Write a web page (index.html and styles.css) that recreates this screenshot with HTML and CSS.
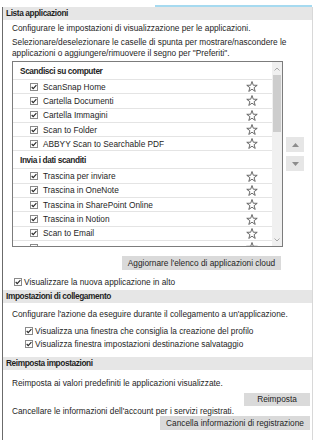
FILE: index.html
```html
<!DOCTYPE html>
<html lang="it">
<head>
<meta charset="utf-8">
<link rel="stylesheet" href="styles.css">
</head>
<body>
<div class="topline"></div>
<div class="panel">
  <section class="sec">
    <div class="sec-head">Lista applicazioni</div>
    <div class="sec-body s1">
      <p>Configurare le impostazioni di visualizzazione per le applicazioni.</p>
      <p class="t2">Selezionare/deselezionare le caselle di spunta per mostrare/nascondere le<br>applicazioni o aggiungere/rimuovere il segno per "Preferiti".</p>
      <div class="list-row">
        <div class="list">
          <div class="items">
            <div class="cat">Scandisci su computer</div>
            <div class="item"><svg class="cb" width="8" height="8" viewBox="0 0 8 8"><rect x=".5" y=".5" width="7" height="7"/><path d="M1.7 4l1.5 1.6L6.4 2.1"/></svg><span>ScanSnap Home</span><svg class="star" width="12" height="11" viewBox="0 0 12 11"><polygon points="6,0.5 7.29,4.22 11.23,4.3 8.09,6.68 9.23,10.45 6,8.2 2.77,10.45 3.91,6.68 0.77,4.3 4.71,4.22"/></svg></div>
            <div class="item"><svg class="cb" width="8" height="8" viewBox="0 0 8 8"><rect x=".5" y=".5" width="7" height="7"/><path d="M1.7 4l1.5 1.6L6.4 2.1"/></svg><span>Cartella Documenti</span><svg class="star" width="12" height="11" viewBox="0 0 12 11"><polygon points="6,0.5 7.29,4.22 11.23,4.3 8.09,6.68 9.23,10.45 6,8.2 2.77,10.45 3.91,6.68 0.77,4.3 4.71,4.22"/></svg></div>
            <div class="item"><svg class="cb" width="8" height="8" viewBox="0 0 8 8"><rect x=".5" y=".5" width="7" height="7"/><path d="M1.7 4l1.5 1.6L6.4 2.1"/></svg><span>Cartella Immagini</span><svg class="star" width="12" height="11" viewBox="0 0 12 11"><polygon points="6,0.5 7.29,4.22 11.23,4.3 8.09,6.68 9.23,10.45 6,8.2 2.77,10.45 3.91,6.68 0.77,4.3 4.71,4.22"/></svg></div>
            <div class="item"><svg class="cb" width="8" height="8" viewBox="0 0 8 8"><rect x=".5" y=".5" width="7" height="7"/><path d="M1.7 4l1.5 1.6L6.4 2.1"/></svg><span>Scan to Folder</span><svg class="star" width="12" height="11" viewBox="0 0 12 11"><polygon points="6,0.5 7.29,4.22 11.23,4.3 8.09,6.68 9.23,10.45 6,8.2 2.77,10.45 3.91,6.68 0.77,4.3 4.71,4.22"/></svg></div>
            <div class="item"><svg class="cb" width="8" height="8" viewBox="0 0 8 8"><rect x=".5" y=".5" width="7" height="7"/><path d="M1.7 4l1.5 1.6L6.4 2.1"/></svg><span>ABBYY Scan to Searchable PDF</span><svg class="star" width="12" height="11" viewBox="0 0 12 11"><polygon points="6,0.5 7.29,4.22 11.23,4.3 8.09,6.68 9.23,10.45 6,8.2 2.77,10.45 3.91,6.68 0.77,4.3 4.71,4.22"/></svg></div>
            <div class="cat">Invia i dati scanditi</div>
            <div class="item"><svg class="cb" width="8" height="8" viewBox="0 0 8 8"><rect x=".5" y=".5" width="7" height="7"/><path d="M1.7 4l1.5 1.6L6.4 2.1"/></svg><span>Trascina per inviare</span><svg class="star" width="12" height="11" viewBox="0 0 12 11"><polygon points="6,0.5 7.29,4.22 11.23,4.3 8.09,6.68 9.23,10.45 6,8.2 2.77,10.45 3.91,6.68 0.77,4.3 4.71,4.22"/></svg></div>
            <div class="item"><svg class="cb" width="8" height="8" viewBox="0 0 8 8"><rect x=".5" y=".5" width="7" height="7"/><path d="M1.7 4l1.5 1.6L6.4 2.1"/></svg><span>Trascina in OneNote</span><svg class="star" width="12" height="11" viewBox="0 0 12 11"><polygon points="6,0.5 7.29,4.22 11.23,4.3 8.09,6.68 9.23,10.45 6,8.2 2.77,10.45 3.91,6.68 0.77,4.3 4.71,4.22"/></svg></div>
            <div class="item"><svg class="cb" width="8" height="8" viewBox="0 0 8 8"><rect x=".5" y=".5" width="7" height="7"/><path d="M1.7 4l1.5 1.6L6.4 2.1"/></svg><span>Trascina in SharePoint Online</span><svg class="star" width="12" height="11" viewBox="0 0 12 11"><polygon points="6,0.5 7.29,4.22 11.23,4.3 8.09,6.68 9.23,10.45 6,8.2 2.77,10.45 3.91,6.68 0.77,4.3 4.71,4.22"/></svg></div>
            <div class="item"><svg class="cb" width="8" height="8" viewBox="0 0 8 8"><rect x=".5" y=".5" width="7" height="7"/><path d="M1.7 4l1.5 1.6L6.4 2.1"/></svg><span>Trascina in Notion</span><svg class="star" width="12" height="11" viewBox="0 0 12 11"><polygon points="6,0.5 7.29,4.22 11.23,4.3 8.09,6.68 9.23,10.45 6,8.2 2.77,10.45 3.91,6.68 0.77,4.3 4.71,4.22"/></svg></div>
            <div class="item"><svg class="cb" width="8" height="8" viewBox="0 0 8 8"><rect x=".5" y=".5" width="7" height="7"/><path d="M1.7 4l1.5 1.6L6.4 2.1"/></svg><span>Scan to Email</span><svg class="star" width="12" height="11" viewBox="0 0 12 11"><polygon points="6,0.5 7.29,4.22 11.23,4.3 8.09,6.68 9.23,10.45 6,8.2 2.77,10.45 3.91,6.68 0.77,4.3 4.71,4.22"/></svg></div>
            <div class="item"><svg class="cb" width="8" height="8" viewBox="0 0 8 8"><rect x=".5" y=".5" width="7" height="7"/><path d="M1.7 4l1.5 1.6L6.4 2.1"/></svg><svg class="star" width="12" height="11" viewBox="0 0 12 11"><polygon points="6,0.5 7.29,4.22 11.23,4.3 8.09,6.68 9.23,10.45 6,8.2 2.77,10.45 3.91,6.68 0.77,4.3 4.71,4.22"/></svg></div>
          </div>
          <div class="sbar">
            <div class="sb-btn"><svg width="6" height="4" viewBox="0 0 6 4"><path d="M.5 3.5L3 1l2.5 2.5"/></svg></div>
            <div class="thumb"></div>
            <div class="track"></div>
            <div class="sb-btn"><svg width="6" height="4" viewBox="0 0 6 4"><path d="M.5 .5L3 3l2.5-2.5"/></svg></div>
          </div>
        </div>
        <div class="movers">
          <div class="mv"><svg width="7" height="4" viewBox="0 0 7 4"><polygon points="3.5,0 7,4 0,4"/></svg></div>
          <div class="mv"><svg width="7" height="4" viewBox="0 0 7 4"><polygon points="0,0 7,0 3.5,4"/></svg></div>
        </div>
      </div>
      <div class="btn-row refresh"><button class="btn w-refresh">Aggiornare l'elenco di applicazioni cloud</button></div>
      <div class="opt opt-top"><svg class="cb" width="8" height="8" viewBox="0 0 8 8"><rect x=".5" y=".5" width="7" height="7"/><path d="M1.7 4l1.5 1.6L6.4 2.1"/></svg><span>Visualizzare la nuova applicazione in alto</span></div>
    </div>
  </section>

  <section class="sec">
    <div class="sec-head">Impostazioni di collegamento</div>
    <div class="sec-body s2">
      <p>Configurare l'azione da eseguire durante il collegamento a un'applicazione.</p>
      <div class="opt opt-in first"><svg class="cb" width="8" height="8" viewBox="0 0 8 8"><rect x=".5" y=".5" width="7" height="7"/><path d="M1.7 4l1.5 1.6L6.4 2.1"/></svg><span>Visualizza una finestra che consiglia la creazione del profilo</span></div>
      <div class="opt opt-in"><svg class="cb" width="8" height="8" viewBox="0 0 8 8"><rect x=".5" y=".5" width="7" height="7"/><path d="M1.7 4l1.5 1.6L6.4 2.1"/></svg><span>Visualizza finestra impostazioni destinazione salvataggio</span></div>
    </div>
  </section>

  <section class="sec">
    <div class="sec-head">Reimposta impostazioni</div>
    <div class="sec-body s3">
      <p>Reimposta ai valori predefiniti le applicazioni visualizzate.</p>
      <div class="btn-row end"><button class="btn w-reset">Reimposta</button></div>
      <p class="tight">Cancellare le informazioni dell'account per i servizi registrati.</p>
      <div class="btn-row end"><button class="btn w-clear">Cancella informazioni di registrazione</button></div>
    </div>
  </section>
</div>
</body>
</html>
```

FILE: styles.css
```css
* { box-sizing: border-box; }

body {
  margin: 0;
  width: 315px;
  height: 448px;
  padding-top: 5px;
  background: #fff;
  font-family: "Liberation Sans", Arial, sans-serif;
  font-size: 8.3px;
  color: #1e1e1e;
  overflow: hidden;
}

.topline {
  height: 2px;
  margin-left: 155px;
  width: 157px;
  background: #a6daf0;
}

.panel {
  margin-left: 2px;
  width: 311px;
  border-left: 1px solid #6b6b6b;
  border-right: 1px solid #d8d8d8;
  padding-bottom: 10px;
}

.sec-head {
  height: 13px;
  line-height: 13px;
  background: #e6e6e6;
  font-weight: bold;
  padding-left: 3px;
  letter-spacing: -0.4px;
}

p {
  margin: 0;
  line-height: 11px;
  white-space: nowrap;
}

.s1 { padding: 3px 0 2px 9px; }
.s2 { padding: 6px 0 7px 9px; }
.s3 { padding: 8px 2px 0 9px; }

.t2 { margin-top: 3px; }

.list-row {
  display: flex;
  margin-top: 2px;
}

.list {
  width: 271px;
  height: 186px;
  border: 1px solid #7c7c7c;
  display: flex;
  overflow: hidden;
}

.items {
  flex: 1;
  overflow: hidden;
}

.cat {
  height: 18px;
  line-height: 18px;
  padding-left: 7px;
  font-weight: bold;
  letter-spacing: -0.4px;
  border-bottom: 1px solid #e4e4e4;
}

.item {
  height: 14.3px;
  display: flex;
  align-items: center;
  padding-left: 17px;
  border-bottom: 1px solid #e4e4e4;
  white-space: nowrap;
}

.item .cb { margin-right: 5px; }

.cb { flex: none; display: block; }
.cb rect { fill: #fff; stroke: #8a8a8a; }
.cb path { fill: none; stroke: #262626; stroke-width: 1.1; }

.star {
  flex: none;
  margin-left: auto;
  margin-right: 14px;
  display: block;
}
.star polygon { fill: #fff; stroke: #5a5a5a; stroke-width: 0.9; }

.sbar {
  width: 10px;
  flex: none;
  background: #f0f0f0;
  display: flex;
  flex-direction: column;
}

.sb-btn {
  height: 13px;
  display: flex;
  align-items: center;
  justify-content: center;
}
.sb-btn path { fill: none; stroke: #a8a8a8; stroke-width: 1; }

.thumb {
  height: 57px;
  margin: 0 1px;
  background: #cdcdcd;
}

.track { flex: 1; }

.movers {
  margin-left: 3px;
  margin-top: 76px;
  display: flex;
  flex-direction: column;
  gap: 4px;
}

.mv {
  width: 18px;
  height: 15px;
  background: #e6e6e6;
  display: flex;
  align-items: center;
  justify-content: center;
}
.mv polygon { fill: #8c8c8c; }

.btn-row { display: flex; }
.btn-row.refresh { margin-top: 9px; padding-left: 110px; }
.btn-row.end { justify-content: flex-end; }

.btn {
  font: inherit;
  color: #1e1e1e;
  background: #dadada;
  border: 0;
  padding: 0;
  margin: 0;
  height: 14px;
  line-height: 14px;
  white-space: nowrap;
}
.w-refresh { width: 159px; }
.w-reset { width: 66px; height: 13px; line-height: 13px; margin-top: 4px; }
.w-clear { width: 150px; }

.tight { line-height: 10px; }

.opt {
  display: flex;
  align-items: center;
  white-space: nowrap;
}
.opt-top {
  height: 12px;
  margin-top: 6px;
  padding-left: 2px;
}
.opt-top .cb { margin-right: 2px; }

.opt-in {
  height: 13px;
  padding-left: 13px;
}
.opt-in.first { margin-top: 4px; }
.opt-in .cb { margin-right: 2px; }
```
